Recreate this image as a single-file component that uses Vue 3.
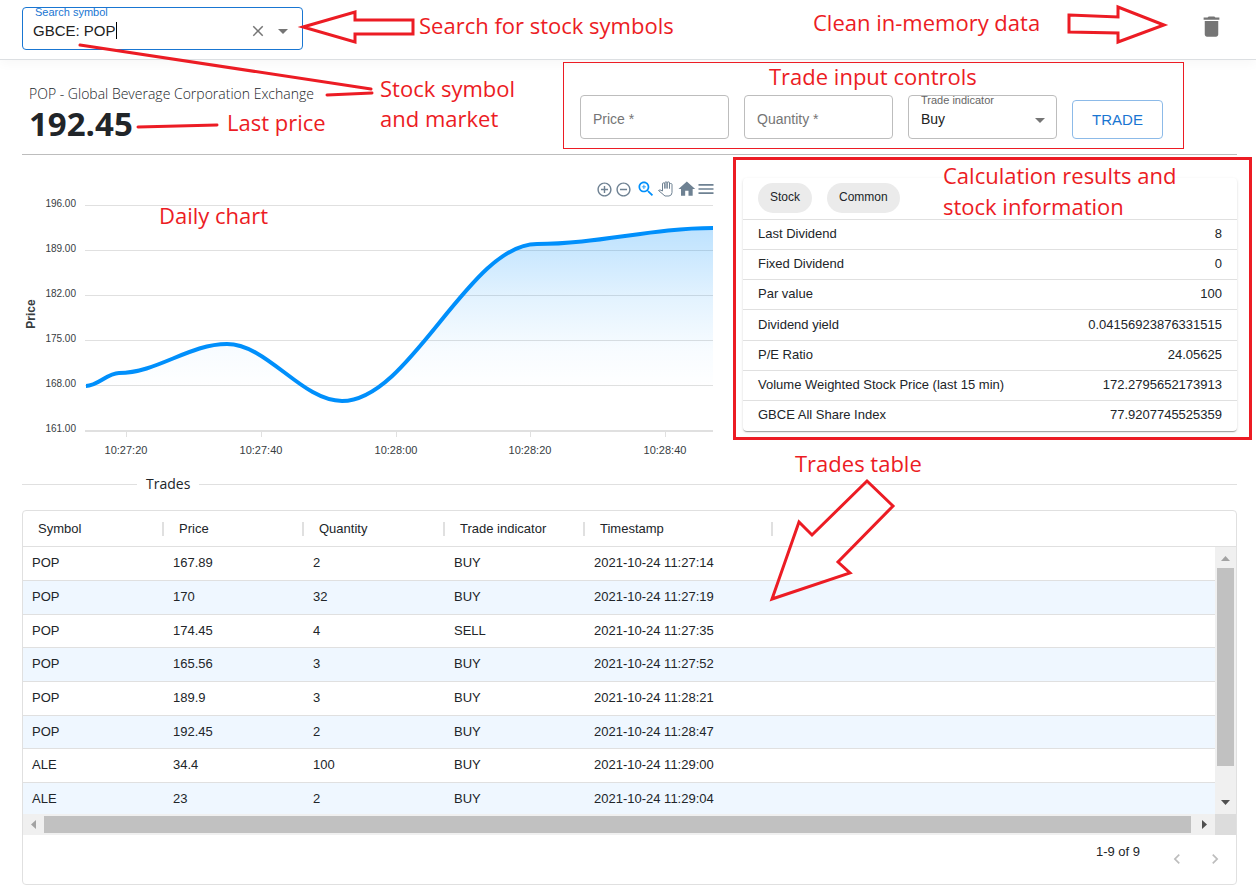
<script setup>
import { ref } from 'vue'

const symbol = ref('GBCE: POP')
const price = ref('')
const quantity = ref('')
const indicator = ref('Buy')

const stats = [
  ['Last Dividend', '8'],
  ['Fixed Dividend', '0'],
  ['Par value', '100'],
  ['Dividend yield', '0.04156923876331515'],
  ['P/E Ratio', '24.05625'],
  ['Volume Weighted Stock Price (last 15 min)', '172.2795652173913'],
  ['GBCE All Share Index', '77.9207745525359'],
]

const columns = ['Symbol', 'Price', 'Quantity', 'Trade indicator', 'Timestamp']
const trades = [
  ['POP', '167.89', '2', 'BUY', '2021-10-24 11:27:14'],
  ['POP', '170', '32', 'BUY', '2021-10-24 11:27:19'],
  ['POP', '174.45', '4', 'SELL', '2021-10-24 11:27:35'],
  ['POP', '165.56', '3', 'BUY', '2021-10-24 11:27:52'],
  ['POP', '189.9', '3', 'BUY', '2021-10-24 11:28:21'],
  ['POP', '192.45', '2', 'BUY', '2021-10-24 11:28:47'],
  ['ALE', '34.4', '100', 'BUY', '2021-10-24 11:29:00'],
  ['ALE', '23', '2', 'BUY', '2021-10-24 11:29:04'],
]

// Chart geometry
const yTicks = [
  ['196.00', 7], ['189.00', 52], ['182.00', 97], ['175.00', 142], ['168.00', 187], ['161.00', 232],
]
const xTicks = [
  ['10:27:20', 104], ['10:27:40', 239], ['10:28:00', 374], ['10:28:20', 508], ['10:28:40', 643],
]
const points = [[64, 188], [97, 175], [205, 146], [320, 203], [515, 46], [691, 30]]
const line = points.reduce((d, [x, y], i) => {
  if (i === 0) return `M${x} ${y}`
  const [px, py] = points[i - 1]
  const c = (x - px) * 0.35
  return `${d} C${px + c} ${py} ${x - c} ${y} ${x} ${y}`
}, '')
const area = `${line} V233 H64 Z`

const notes = [
  ['Search for stock symbols', 419, 34],
  ['Clean in-memory data', 813, 31],
  ['Stock symbol', 380, 97],
  ['and market', 380, 127],
  ['Last price', 227, 131],
  ['Trade input controls', 769, 85],
  ['Daily chart', 159, 224],
  ['Calculation results and', 943, 184],
  ['stock information', 943, 215],
  ['Trades table', 795, 472],
]
</script>

<template>
  <div class="page">
    <header class="topbar">
      <div class="field search">
        <label for="symbol" class="float">Search symbol</label>
        <div class="search-row">
          <input id="symbol" v-model="symbol" type="text" autocomplete="off" />
          <span class="caret"></span>
          <button class="icon-btn push" type="button" aria-label="Clear">
            <svg width="18" height="18" viewBox="0 0 24 24"><path d="M19 6.41 17.59 5 12 10.59 6.41 5 5 6.41 10.59 12 5 17.59 6.41 19 12 13.41 17.59 19 19 17.59 13.41 12z" /></svg>
          </button>
          <button class="icon-btn" type="button" aria-label="Open">
            <svg width="24" height="24" viewBox="0 0 24 24"><path d="m7 10 5 5 5-5z" /></svg>
          </button>
        </div>
      </div>
      <button class="icon-btn trash" type="button" aria-label="Clean data">
        <svg width="27" height="27" viewBox="0 0 24 24"><path d="M6 19c0 1.1.9 2 2 2h8c1.1 0 2-.9 2-2V7H6v12zM19 4h-3.5l-1-1h-5l-1 1H5v2h14V4z" /></svg>
      </button>
    </header>

    <main>
      <section class="summary">
        <div class="quote">
          <p class="company">POP - Global Beverage Corporation Exchange</p>
          <h1>192.45</h1>
        </div>
        <form class="trade" @submit.prevent>
          <div class="field box">
            <input id="price" v-model="price" type="text" placeholder="Price *" aria-label="Price" />
          </div>
          <div class="field box">
            <input id="quantity" v-model="quantity" type="text" placeholder="Quantity *" aria-label="Quantity" />
          </div>
          <div class="field box">
            <label for="indicator" class="float">Trade indicator</label>
            <select id="indicator" v-model="indicator">
              <option>Buy</option>
              <option>Sell</option>
            </select>
            <svg class="drop" width="24" height="24" viewBox="0 0 24 24"><path d="m7 10 5 5 5-5z" /></svg>
          </div>
          <button class="trade-btn" type="submit">TRADE</button>
        </form>
      </section>

      <section class="overview">
        <div class="chart">
          <div class="toolbar">
            <button type="button" class="zoom-btn" aria-label="Zoom in">
              <svg width="17" height="17" viewBox="0 0 24 24"><path d="M13 7h-2v4H7v2h4v4h2v-4h4v-2h-4V7zm-1-5C6.48 2 2 6.48 2 12s4.48 10 10 10 10-4.48 10-10S17.52 2 12 2zm0 18c-4.41 0-8-3.59-8-8s3.59-8 8-8 8 3.59 8 8-3.59 8-8 8z" /></svg>
            </button>
            <button type="button" class="zoom-btn out" aria-label="Zoom out">
              <svg width="17" height="17" viewBox="0 0 24 24"><path d="M7 11v2h10v-2H7zm5-9C6.48 2 2 6.48 2 12s4.48 10 10 10 10-4.48 10-10S17.52 2 12 2zm0 18c-4.41 0-8-3.59-8-8s3.59-8 8-8 8 3.59 8 8-3.59 8-8 8z" /></svg>
            </button>
            <button type="button" class="on" aria-label="Selection zoom">
              <svg width="20" height="20" viewBox="0 0 24 24"><path d="M15.5 14h-.79l-.28-.27C15.41 12.59 16 11.11 16 9.5 16 5.91 13.09 3 9.5 3S3 5.91 3 9.5 5.91 16 9.5 16c1.61 0 3.09-.59 4.23-1.57l.27.28v.79l5 4.99L20.49 19l-4.99-5zm-6 0C7.01 14 5 11.99 5 9.5S7.01 5 9.5 5 14 7.01 14 9.5 11.99 14 9.5 14z" /><path d="M12 10h-2v2H9v-2H7V9h2V7h1v2h2v1z" /></svg>
            </button>
            <button type="button" aria-label="Pan">
              <svg width="18" height="18" viewBox="0 0 18 18"><path class="hand" d="M5.5 11V4q0-1.200 1.200-1.200T7.900 4v4.500M7.900 8.500V3q0-1.200 1.100-1.200T10.100 3v5.500M10.100 8.500V3q0-1.200 1.200-1.200T12.500 3v5.500M12.500 8.500V4.500q0-1 1.200-1t1.300 1v8q0 3-3 3.500H8L1.500 10.500q1-1.500 4 .5" /></svg>
            </button>
            <button type="button" aria-label="Reset zoom">
              <svg width="20" height="20" viewBox="0 0 24 24"><path d="M11 20v-6h4v6h5v-8h3L13 3 3 12h3v8z" /></svg>
            </button>
            <button type="button" aria-label="Menu">
              <svg width="20" height="20" viewBox="0 0 24 24"><path d="M3 18h18v-2H3v2zm0-5h18v-2H3v2zm0-7v2h18V6H3z" /></svg>
            </button>
          </div>
          <svg class="plot" viewBox="0 0 694 264" role="img" aria-label="Daily price">
            <defs>
              <linearGradient id="fade" x1="0" y1="30" x2="0" y2="233" gradientUnits="userSpaceOnUse">
                <stop offset="0" stop-color="#008ffb" stop-opacity="0.26" />
                <stop offset="0.35" stop-color="#008ffb" stop-opacity="0.11" />
                <stop offset="0.6" stop-color="#008ffb" stop-opacity="0.03" />
                <stop offset="0.8" stop-color="#008ffb" stop-opacity="0" />
              </linearGradient>
            </defs>
            <g v-for="([label, y], i) in yTicks" :key="label">
              <rect x="63" :y="y" width="628" :height="i === 5 ? 2 : 1" fill="#e0e0e0" />
              <text class="y-label" x="54" :y="y + 2">{{ label }}</text>
            </g>
            <g v-for="[label, x] in xTicks" :key="label">
              <rect :x="x" y="234" width="1" height="5" fill="#e0e0e0" />
              <text class="x-label" :x="x" y="256">{{ label }}</text>
            </g>
            <text class="axis" transform="translate(13 116) rotate(-90)">Price</text>
            <path :d="area" fill="url(#fade)" />
            <path :d="line" fill="none" stroke="#008ffb" stroke-width="4" />
          </svg>
        </div>

        <div class="card">
          <div class="chips">
            <span class="chip">Stock</span>
            <span class="chip">Common</span>
          </div>
          <table class="stats">
            <tbody>
              <tr v-for="[name, value] in stats" :key="name">
                <th scope="row">{{ name }}</th>
                <td>{{ value }}</td>
              </tr>
            </tbody>
          </table>
        </div>
      </section>

      <h2 class="divider">Trades</h2>

      <section class="grid">
        <div class="viewport">
          <table class="trades">
            <colgroup>
              <col class="c1" /><col class="c2" /><col class="c1" /><col class="c2" /><col class="c3" /><col />
            </colgroup>
            <thead>
              <tr>
                <th v-for="c in columns" :key="c" scope="col"><span>{{ c }}</span></th>
                <td></td>
              </tr>
            </thead>
            <tbody>
              <tr v-for="t in trades" :key="t[4]">
                <td v-for="(v, i) in t" :key="i">{{ v }}</td>
                <td></td>
              </tr>
            </tbody>
          </table>
          <div class="vbar">
            <svg width="21" height="21" viewBox="0 0 21 21"><path d="M6 14h9l-4.500-5z" fill="#a3a3a3" /></svg>
            <div class="vthumb"></div>
            <svg width="21" height="21" viewBox="0 0 21 21"><path d="M6 7h9l-4.500 5z" fill="#505050" /></svg>
          </div>
        </div>
        <div class="hbar">
          <svg width="21" height="21" viewBox="0 0 21 21"><path d="M13 6v9l-5-4.500z" fill="#a3a3a3" /></svg>
          <div class="hthumb"></div>
          <svg width="21" height="21" viewBox="0 0 21 21"><path d="M8 6v9l5-4.500z" fill="#505050" /></svg>
          <div class="corner"></div>
        </div>
        <footer class="pager">
          <span>1-9 of 9</span>
          <button type="button" aria-label="Previous page" disabled>
            <svg width="20" height="20" viewBox="0 0 24 24"><path d="M15.41 7.41 14 6l-6 6 6 6 1.41-1.41L10.83 12z" /></svg>
          </button>
          <button type="button" aria-label="Next page" disabled>
            <svg width="20" height="20" viewBox="0 0 24 24"><path d="M10 6 8.59 7.41 13.17 12l-4.58 4.59L10 18l6-6z" /></svg>
          </button>
        </footer>
      </section>
    </main>

    <svg class="notes" viewBox="0 0 1256 891">
      <g class="ink">
        <path d="M303 27 355 12V20H413V34H355V42Z" />
        <path d="M1069 15 1118 17V7L1164 25 1118 42V33L1069 32Z" />
        <path d="M867 481 893 506 838 562 850 573 772 599 799 522 812 535Z" />
        <path d="M80 45 371 89M327 95 372 93M138 127 217 125" stroke-linecap="round" />
        <rect class="frame" x="734.5" y="158.5" width="516" height="280" />
        <rect class="thin" x="563.5" y="62.5" width="620" height="86" />
      </g>
      <text v-for="[text, x, y] in notes" :key="text" :x="x" :y="y">{{ text }}</text>
    </svg>
  </div>
</template>

<style>
body {
  margin: 0;
  background: #fff;
}
</style>

<style scoped>
.page {
  position: relative;
  font-family: "Liberation Sans", Arial, sans-serif;
  font-size: 13px;
  color: #212529;
}
.page *,
.page {
  box-sizing: border-box;
}
button {
  border: 0;
  padding: 0;
  background: none;
  font: inherit;
}
input,
select {
  border: 0;
  padding: 0;
  outline: 0;
  background: none;
  font: inherit;
  color: #212121;
  appearance: none;
}
.topbar {
  display: flex;
  justify-content: space-between;
  height: 60px;
  padding: 7px 31px 0 22px;
  border-bottom: 1px solid #dcdfe2;
  box-shadow: 0 4px 10px rgba(0, 0, 0, 0.03);
}
.field {
  position: relative;
  height: 44px;
  border: 1px solid #bdbdbd;
  border-radius: 4px;
}
.float {
  position: absolute;
  top: -2px;
  left: 12px;
  font-size: 11px;
  line-height: 12px;
  color: #666;
}
.search {
  width: 281px;
  height: 43px;
  border-color: #1976d2;
}
.search .float {
  color: #1976d2;
}
.search-row {
  display: flex;
  align-items: center;
  height: 41px;
  padding: 4px 7px 0 10px;
  font-size: 15px;
}
.search-row input {
  field-sizing: content;
}
.caret {
  width: 1px;
  height: 17px;
  background: #000;
}
.icon-btn {
  display: flex;
  fill: #757575;
}
.push {
  margin: 0 4px 0 auto;
}
.trash {
  align-self: flex-start;
  margin-top: 6px;
}
main {
  padding: 0 19px 0 22px;
}
.summary {
  display: flex;
  justify-content: space-between;
  height: 95px;
  border-bottom: 1px solid #bdbdbd;
}
.quote {
  padding: 23px 0 0 7px;
  font-family: "Open Sans", "Noto Sans", sans-serif;
}
.company {
  margin: 0;
  font-size: 14px;
  font-weight: 300;
  line-height: 22px;
}
h1 {
  margin: 0;
  font-size: 33px;
  font-weight: 700;
  line-height: 38px;
}
.trade {
  display: flex;
  align-items: flex-end;
  gap: 15px;
  padding: 0 74px 15px 0;
}
.box {
  width: 149px;
  font-size: 14px;
}
.box input,
.box select {
  width: 100%;
  height: 42px;
  padding: 4px 12px 0;
}
.box input::placeholder {
  color: #757575;
  opacity: 1;
}
.drop {
  position: absolute;
  top: 12px;
  right: 4px;
  fill: #757575;
  pointer-events: none;
}
.trade-btn {
  width: 91px;
  height: 39px;
  border: 1px solid #8cbae8;
  border-radius: 4px;
  font-size: 15px;
  color: #1976d2;
}
.overview {
  display: grid;
  grid-template-columns: 694fr 494fr;
  gap: 27px;
  align-items: start;
  padding-top: 23px;
}
.toolbar {
  display: flex;
  justify-content: flex-end;
  height: 20px;
  padding-top: 1px;
}
.toolbar button {
  display: flex;
  align-items: center;
  justify-content: center;
  width: 20px;
  height: 20px;
  fill: #6e8192;
}
.toolbar .zoom-btn {
  width: 19px;
}
.toolbar .out {
  margin-right: 3px;
}
.toolbar .on {
  fill: #008ffb;
}
.hand {
  fill: none;
  stroke: #6e8192;
}
.plot {
  display: block;
  width: 100%;
}
.y-label {
  font-size: 10px;
  text-anchor: end;
  fill: #373d3f;
}
.x-label {
  font-size: 11px;
  text-anchor: middle;
  fill: #373d3f;
}
.axis {
  font-size: 12px;
  font-weight: 700;
  text-anchor: middle;
  fill: #373d3f;
}
.card {
  border-radius: 4px;
  box-shadow: 0 2px 1px -1px rgba(0, 0, 0, 0.2), 0 1px 1px rgba(0, 0, 0, 0.14), 0 1px 3px rgba(0, 0, 0, 0.12);
}
.chips {
  display: flex;
  gap: 15px;
  padding: 5px 15px 6px;
}
.chip {
  height: 30px;
  padding: 0 12px;
  border-radius: 15px;
  background: #ebebeb;
  font-size: 12px;
  line-height: 28px;
}
.stats {
  width: 100%;
  border-collapse: collapse;
}
.stats th,
.stats td {
  height: 30px;
  padding: 0 15px 2px;
  border-top: 1px solid #e0e0e0;
  font-weight: 400;
  text-align: left;
}
.stats tr:nth-child(4) > * {
  height: 31px;
}
.stats td {
  text-align: right;
}
.divider {
  display: flex;
  align-items: center;
  gap: 9px;
  margin: 12px 0 16px;
  font-family: "Open Sans", "Noto Sans", sans-serif;
  font-size: 14px;
  font-weight: 400;
  line-height: 20px;
}
.divider::before,
.divider::after {
  content: "";
  flex: 1;
  height: 1px;
  background: #e0e0e0;
}
.divider::before {
  flex: 0 0 115px;
}
.grid {
  border: 1px solid #e0e0e0;
  border-radius: 4px;
}
.viewport {
  position: relative;
  height: 303px;
  overflow: hidden;
}
.trades {
  width: 100%;
  table-layout: fixed;
  border-collapse: separate;
  border-spacing: 0;
}
.c1 {
  width: 141px;
}
.c2 {
  width: 140px;
}
.c3 {
  width: 188px;
}
.trades th,
.trades td {
  padding: 0 9px 2px;
  border-bottom: 1px solid #e0e0e0;
  font-weight: 400;
  text-align: left;
}
.trades thead tr {
  height: 36px;
}
.trades th {
  padding: 0;
}
.trades th span {
  display: block;
  padding-left: 15px;
  border-right: 2px solid #e0e0e0;
  line-height: 14px;
}
.trades tbody tr {
  height: 34px;
}
.trades tbody tr:nth-child(3n) {
  height: 33px;
}
.trades tbody tr:nth-child(even) {
  background: #eff7ff;
}
.vbar {
  position: absolute;
  top: 36px;
  right: 0;
  bottom: 0;
  display: flex;
  flex-direction: column;
  width: 21px;
  background: #f0f0f0;
}
.vthumb {
  flex: 0 0 198px;
  margin: 0 2px auto;
  background: #c1c1c1;
}
.hbar {
  display: flex;
  height: 21px;
  background: #f0f0f0;
}
.hthumb {
  flex: 1;
  margin: 2px 3px 2px 0;
  background: #c1c1c1;
}
.corner {
  width: 21px;
  background: #dcdcdc;
}
.pager {
  display: flex;
  align-items: flex-start;
  height: 49px;
  padding: 0 11px;
}
.pager span {
  margin: 9px 27px 0 auto;
  line-height: 16px;
}
.pager button {
  display: flex;
  margin: 14px 0 0 18px;
  fill: #bdbdbd;
}
.pager span + button {
  margin-left: 0;
}
.notes {
  position: absolute;
  top: 0;
  left: 0;
  width: 100%;
  pointer-events: none;
  font-family: "Open Sans", "Noto Sans", sans-serif;
  font-size: 22px;
  fill: #ec1c24;
}
.ink {
  fill: none;
  stroke: #ec1c24;
  stroke-width: 3;
}
.thin {
  stroke-width: 1;
}
</style>
